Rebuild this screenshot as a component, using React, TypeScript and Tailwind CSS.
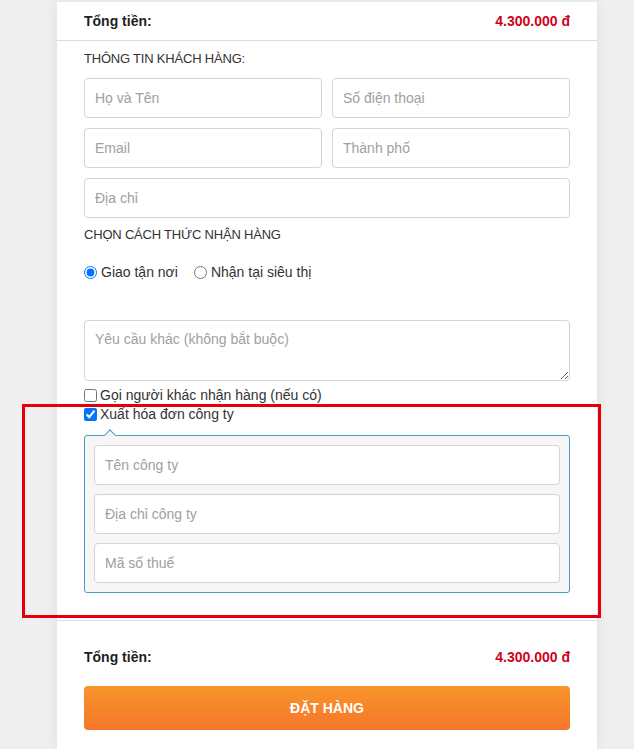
import React from "react";

const font = { fontFamily: '"Liberation Sans", Arial, sans-serif' };

const inputCls =
  "h-[40px] w-full rounded-[4px] border border-[#d4d4d4] bg-white px-[10px] text-[14px] text-[#333] outline-none placeholder:text-[#a0a0a0]";

function TotalRow() {
  return (
    <div className="flex items-center justify-between">
      <span className="text-[14px] font-bold text-[#222]">Tổng tiền:</span>
      <span className="text-[14px] font-bold text-[#d0021b]">4.300.000 đ</span>
    </div>
  );
}

export default function App() {
  return (
    <div className="relative min-h-[749px] bg-[#efefef] pt-[2px]" style={font}>
      <div className="ml-[57px] w-[540px] bg-white shadow-[0_0_12px_rgba(0,0,0,0.07)]">
        <div className="h-[39px] border-b border-[#dcdcdc] px-[27px] pt-[9px]">
          <TotalRow />
        </div>

        <div className="px-[27px] pb-[27px] pt-[8px]">
          <div className="text-[13px] leading-[20px] tracking-[-0.2px] text-[#333]">
            THÔNG TIN KHÁCH HÀNG:
          </div>

          <div className="mt-[9px] grid grid-cols-2 gap-[10px]">
            <input className={inputCls} placeholder="Họ và Tên" />
            <input className={inputCls} placeholder="Số điện thoại" />
            <input className={inputCls} placeholder="Email" />
            <input className={inputCls} placeholder="Thành phố" />
            <input className={`${inputCls} col-span-2`} placeholder="Địa chỉ" />
          </div>

          <div className="mt-[7px] text-[13px] leading-[20px] tracking-[-0.2px] text-[#333]">
            CHỌN CÁCH THỨC NHẬN HÀNG
          </div>

          <div className="mt-[17px] flex items-center gap-[16px] text-[14px] leading-[20px] text-[#333]">
            <label className="flex items-center gap-[4px]">
              <input type="radio" name="ship" defaultChecked className="m-0 h-[13px] w-[13px]" />
              Giao tận nơi
            </label>
            <label className="flex items-center gap-[4px]">
              <input type="radio" name="ship" className="m-0 h-[13px] w-[13px]" />
              Nhận tại siêu thị
            </label>
          </div>

          <textarea
            className="mt-[38px] block h-[61px] w-full rounded-[4px] border border-[#d4d4d4] px-[10px] pt-[8px] text-[14px] leading-[20px] outline-none placeholder:text-[#a0a0a0]"
            placeholder="Yêu cầu khác (không bắt buộc)"
          />

          <label className="mt-[5px] flex items-center gap-[3px] text-[14px] leading-[19px] text-[#333]">
            <input type="checkbox" className="m-0 h-[13px] w-[13px]" />
            Gọi người khác nhận hàng (nếu có)
          </label>
          <label className="flex items-center gap-[3px] text-[14px] leading-[19px] text-[#333]">
            <input type="checkbox" defaultChecked className="m-0 h-[13px] w-[13px]" />
            Xuất hóa đơn công ty
          </label>

          <div className="relative mt-[11px] flex flex-col gap-[9px] rounded-[3px] border border-[#4a9bc1] bg-[#f6f6f6] p-[9px]">
            <span className="absolute left-[21px] top-[-5px] h-[8px] w-[8px] rotate-45 border-l border-t border-[#4a9bc1] bg-[#f6f6f6]" />
            <input className={inputCls} placeholder="Tên công ty" />
            <input className={inputCls} placeholder="Địa chỉ công ty" />
            <input className={inputCls} placeholder="Mã số thuế" />
          </div>
        </div>

        <div className="border-t border-[#dcdcdc] px-[27px] pb-[20px] pt-[26px]">
          <TotalRow />
          <button className="mt-[18px] flex h-[44px] w-full items-center justify-center rounded-[4px] bg-gradient-to-b from-[#f7952a] to-[#f5752c] text-[14px] font-bold text-white">
            ĐẶT HÀNG
          </button>
        </div>
      </div>

      <div className="pointer-events-none absolute left-[22px] top-[404px] h-[214px] w-[579px] border-[3px] border-[#e3000b]" />
    </div>
  );
}
